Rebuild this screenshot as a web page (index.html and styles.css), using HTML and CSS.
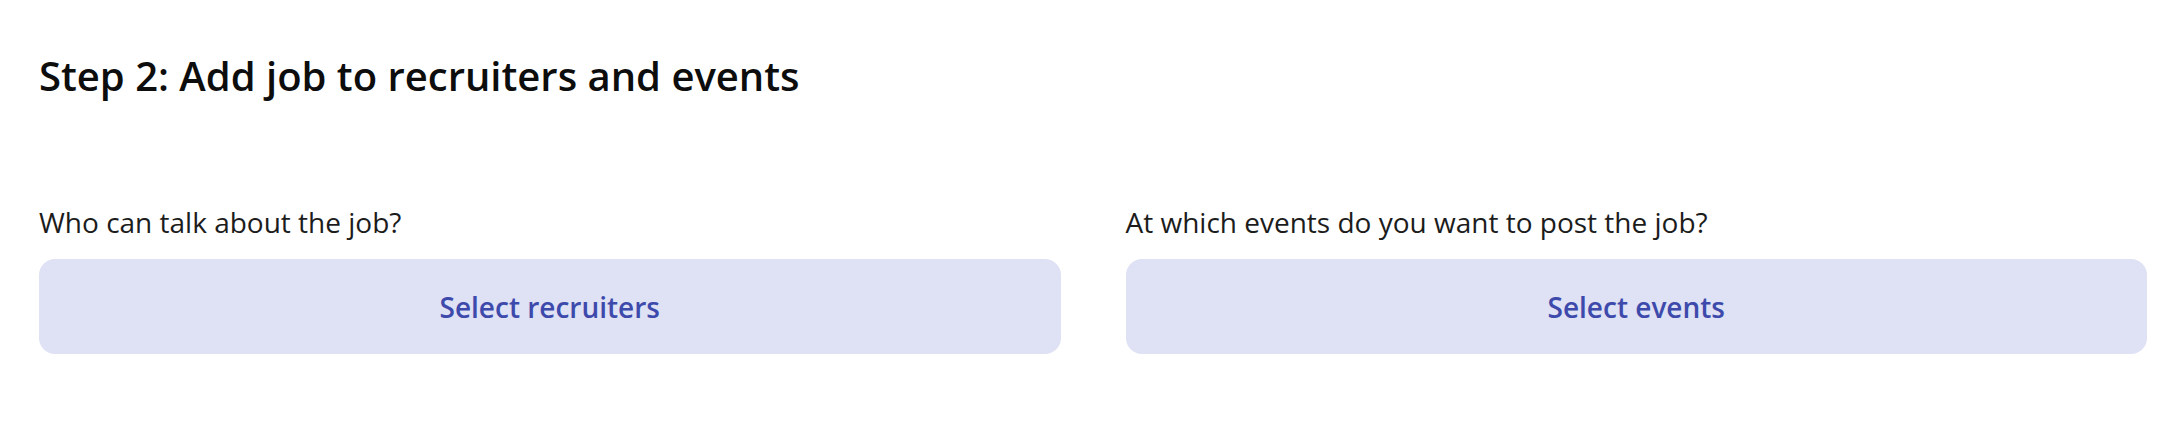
FILE: index.html
```html
<!DOCTYPE html>
<html lang="en">
<head>
  <meta charset="UTF-8" />
  <meta name="viewport" content="width=device-width, initial-scale=1" />
  <title>Step 2: Add job to recruiters and events</title>
  <link rel="stylesheet" href="styles.css">
</head>
<body>
  <main class="step">
    <h1 class="step-title">Step 2: Add job to recruiters and events</h1>
    <div class="pickers">
      <div class="picker">
        <label class="picker-label" for="recruiters">Who can talk about the job?</label>
        <button class="picker-btn" id="recruiters" type="button">Select recruiters</button>
      </div>
      <div class="picker">
        <label class="picker-label" for="events">At which events do you want to post the job?</label>
        <button class="picker-btn" id="events" type="button">Select events</button>
      </div>
    </div>
  </main>
</body>
</html>
```

FILE: styles.css
```css
:root {
  --text-color: #1c1c1c;
  --picker-bg: #dfe1f5;
  --picker-text: #3d4aab;
  --font-family: 'Open Sans', 'Noto Sans', sans-serif;
}

body {
  margin: 0;
  background: #fff;
  font-family: var(--font-family);
  color: var(--text-color);
}

.step {
  padding: 48px 27px 0 39px;
}

.step-title {
  margin: 0 0 100px;
  font-size: 40px;
  font-weight: 600;
  line-height: normal;
  color: #0d0d0d;
}

.pickers {
  display: grid;
  grid-template-columns: 1fr 1fr;
  gap: 65px;
}

.picker {
  display: flex;
  flex-direction: column;
  gap: 18px;
}

.picker-label {
  font-size: 28px;
  line-height: normal;
}

.picker-btn {
  height: 95px;
  border: none;
  border-radius: 16px;
  background: var(--picker-bg);
  color: var(--picker-text);
  font-family: var(--font-family);
  font-size: 28px;
  font-weight: 600;
  cursor: pointer;
}
```
